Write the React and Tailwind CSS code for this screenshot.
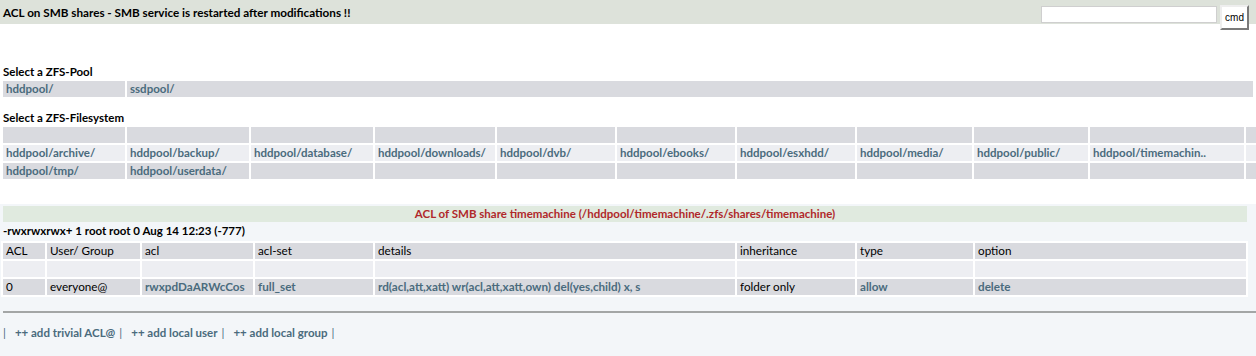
import React from "react";

const link = "font-bold text-[#4a6b7d]";

const fsRows = [
  [
    { w: 122 }, { w: 122 }, { w: 122 }, { w: 120 }, { w: 118 }, { w: 118 },
    { w: 118 }, { w: 115 }, { w: 114 }, { w: 154 }, { w: 40 },
  ],
  [
    { w: 122, t: "hddpool/archive/" },
    { w: 122, t: "hddpool/backup/" },
    { w: 122, t: "hddpool/database/" },
    { w: 120, t: "hddpool/downloads/" },
    { w: 118, t: "hddpool/dvb/" },
    { w: 118, t: "hddpool/ebooks/" },
    { w: 118, t: "hddpool/esxhdd/" },
    { w: 115, t: "hddpool/media/" },
    { w: 114, t: "hddpool/public/" },
    { w: 154, t: "hddpool/timemachin..", active: true },
    { w: 40 },
  ],
  [
    { w: 122, t: "hddpool/tmp/" },
    { w: 122, t: "hddpool/userdata/" },
    { w: 122 }, { w: 120 }, { w: 118 }, { w: 118 },
    { w: 118 }, { w: 115 }, { w: 114 }, { w: 154 }, { w: 40 },
  ],
];

const aclCols = [42, 93, 111, 118, 360, 118, 116, 271];

const aclRows = [
  {
    bg: "bg-[#d9dadf]",
    cells: [
      { t: "ACL" }, { t: "User/ Group" }, { t: "acl" }, { t: "acl-set" },
      { t: "details" }, { t: "inheritance" }, { t: "type" }, { t: "option" },
    ],
  },
  { bg: "bg-[#edeef2]", cells: [{}, {}, {}, {}, {}, {}, {}, {}] },
  {
    bg: "bg-[#d9dadf]",
    cells: [
      { t: "0" },
      { t: "everyone@" },
      { t: "rwxpdDaARWcCos", l: true },
      { t: "full_set", l: true },
      { t: "rd(acl,att,xatt) wr(acl,att,xatt,own) del(yes,child) x, s", l: true },
      { t: "folder only" },
      { t: "allow", l: true },
      { t: "delete", l: true },
    ],
  },
];

export default function App() {
  return (
    <div className="w-[1256px] h-[356px] overflow-hidden bg-white text-[12px] leading-none font-['Lato',sans-serif] text-black">
      {/* top bar */}
      <div className="h-[24px] bg-[#dde2da] flex items-start">
        <div className="pl-[3px] pt-[7px] font-bold text-[11.7px] flex-1">
          ACL on SMB shares - SMB service is restarted after modifications !!
        </div>
        <input
          type="text"
          className="mt-[6px] w-[176px] h-[17px] bg-white border border-[#cfcfcf] outline-none"
        />
        <button className="mt-[5px] ml-[3px] mr-[7px] w-[29px] h-[25px] bg-white border-2 border-t-[#eeeeee] border-l-[#eeeeee] border-r-[#7a7a7a] border-b-[#7a7a7a] text-[10px] font-['Liberation_Sans',sans-serif] text-black">
          cmd
        </button>
      </div>

      {/* pool select */}
      <div className="mt-[42px] pl-[3px] font-bold text-[11.5px]">Select a ZFS-Pool</div>
      <div className="mt-[3px] flex gap-[2px] pl-[3px] pr-[3px]">
        <div className={`w-[122px] h-[16px] bg-[#d9dadf] pl-[3px] flex items-center text-[11.5px] ${link}`}>
          hddpool/
        </div>
        <div className={`flex-1 h-[16px] bg-[#d9dadf] pl-[3px] flex items-center text-[11.5px] ${link}`}>
          ssdpool/
        </div>
      </div>

      {/* filesystem select */}
      <div className="mt-[15px] pl-[3px] font-bold text-[11.5px]">Select a ZFS-Filesystem</div>
      <div className="mt-[4px] flex flex-col gap-[2px] pl-[3px]">
        {fsRows.map((row, i) => (
          <div key={i} className="flex gap-[2px]">
            {row.map((c, j) => (
              <div
                key={j}
                style={{ width: c.w }}
                className={`shrink-0 h-[16px] pl-[3px] flex items-center text-[11.5px] whitespace-nowrap overflow-hidden ${link} ${
                  i === 1 ? "bg-[#edeef2]" : "bg-[#d9dadf]"
                } ${c.active ? "text-[#3f5f70]" : ""}`}
              >
                {c.t}
              </div>
            ))}
          </div>
        ))}
      </div>

      {/* acl panel */}
      <div className="mt-[25px] bg-[#f3f6f9] h-[200px] pt-[2px]">
        <div className="mx-[3px] w-[1244px] h-[16px] bg-[#e0eadf] flex items-center justify-center font-bold text-[11.5px] text-[#b0282a]">
          ACL of SMB share timemachine (/hddpool/timemachine/.zfs/shares/timemachine)
        </div>
        <div className="pl-[3px] mt-[3px] font-bold text-[11.5px]">
          -rwxrwxrwx+ 1 root root 0 Aug 14 12:23 (-777)
        </div>
        <div className="mt-[4px] ml-[1px] w-[1247px] bg-white p-[2px] flex flex-col gap-[2px]">
          {aclRows.map((r, i) => (
            <div key={i} className="flex gap-[2px]">
              {r.cells.map((c, j) => (
                <div
                  key={j}
                  style={{ width: aclCols[j] }}
                  className={`shrink-0 h-[16px] pl-[3px] flex items-center text-[11.7px] whitespace-nowrap ${r.bg} ${
                    c.l ? link : ""
                  }`}
                >
                  {c.t}
                </div>
              ))}
            </div>
          ))}
        </div>
        <div className="mt-[14px] ml-[3px] h-[2px] bg-[#a3a6a6]" />
        <div className="mt-[14px] pl-[3px] flex items-center text-[11.5px]">
          <span className="text-[#4a6b7d] mr-[9px]">|</span>
          <span className={link}>++ add trivial ACL@</span>
          <span className="text-[#4a6b7d] ml-[4px] mr-[9px]">|</span>
          <span className={link}>++ add local user</span>
          <span className="text-[#4a6b7d] ml-[4px] mr-[9px]">|</span>
          <span className={link}>++ add local group</span>
          <span className="text-[#4a6b7d] ml-[4px]">|</span>
        </div>
      </div>
    </div>
  );
}
